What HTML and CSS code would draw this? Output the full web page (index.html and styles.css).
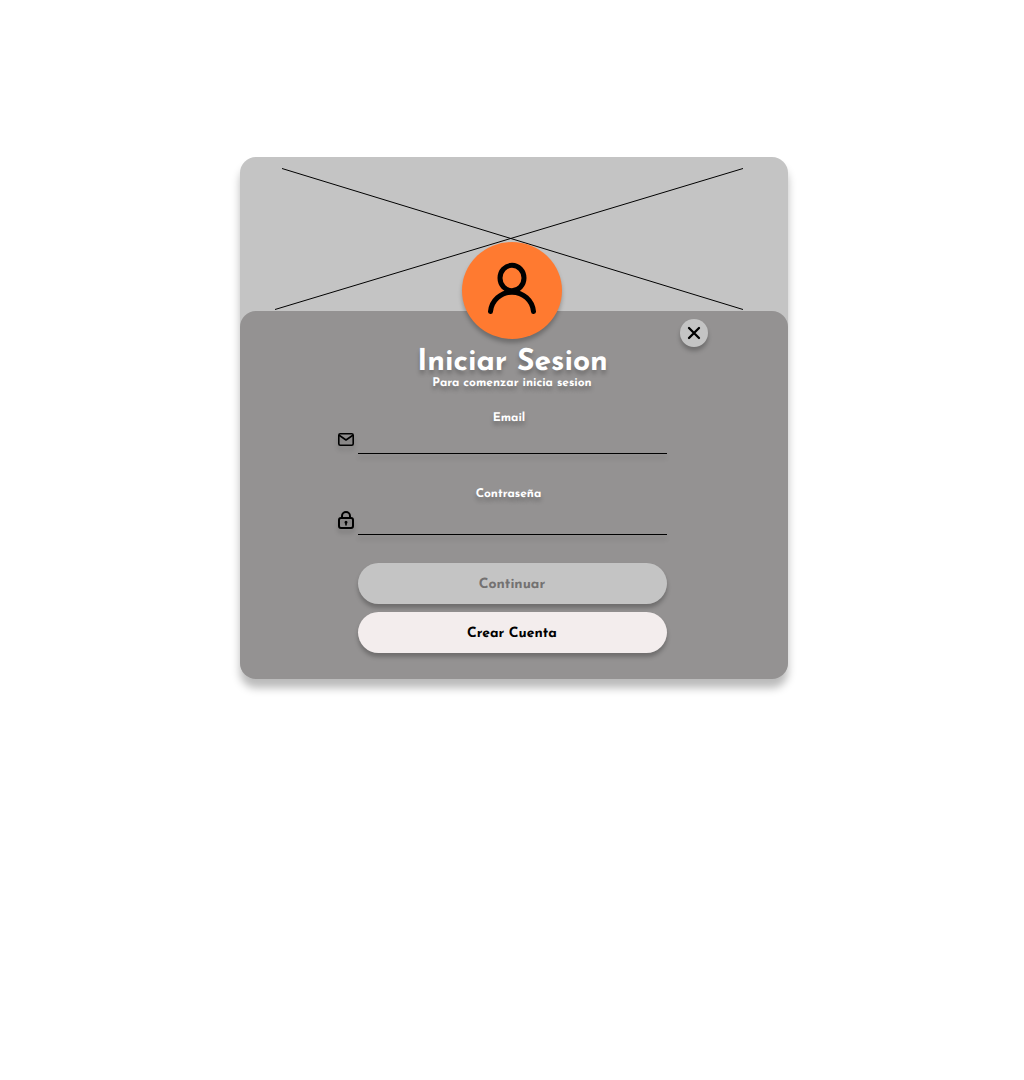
FILE: index.html
```html
<!DOCTYPE html>
<html lang="es">
<head>
<meta charset="utf-8">
<title>Iniciar Sesion</title>
<link rel="stylesheet" href="styles.css">
</head>
<body>
<main class="card">
  <svg class="cover" viewBox="0 0 548 154" aria-hidden="true">
    <path d="M42 11.5 503 152.500M35 152.500 503 11.500" fill="none" stroke="#000" stroke-width="1"/>
  </svg>
  <section class="panel">
    <div class="avatar">
      <svg width="50" height="54" viewBox="0 0 50 54" fill="none" stroke="#000" stroke-width="5" stroke-linecap="round">
        <ellipse cx="25" cy="16" rx="12" ry="12.700"/>
        <path d="M3.500 49.500A21.600 21.400 0 0 1 46.500 49.500"/>
      </svg>
    </div>
    <button class="close" type="button" aria-label="Cerrar">
      <svg width="14" height="14" viewBox="0 0 14 14" stroke="#000" stroke-width="2.300" stroke-linecap="round"><path d="M2 2 12 12M12 2 2 12"/></svg>
    </button>
    <h1 class="title">Iniciar Sesion</h1>
    <p class="subtitle">Para comenzar inicia sesion</p>
    <form class="form">
      <div class="field">
        <label class="label email-label" for="email">Email</label>
        <svg class="icon" width="16" height="20" viewBox="0 0 16 20" fill="none" stroke="#000" stroke-width="1.600" stroke-linejoin="round" stroke-linecap="round"><rect x=".8" y="3.800" width="14.400" height="11.400" rx="1.500"/><path d="M1.500 5.500 8 10l6.500-4.500"/></svg>
        <input class="input" id="email" type="email">
      </div>
      <div class="field password">
        <label class="label password-label" for="password">Contraseña</label>
        <svg class="icon" width="16" height="20" viewBox="0 0 16 20" fill="none" stroke="#000" stroke-width="2"><rect x="1" y="8" width="14" height="10" rx="2"/><path d="M4 8V6a4 4 0 0 1 8 0v2"/><path d="M8 12v3.500" stroke-width="1.600"/><circle cx="8" cy="12.300" r=".7" stroke-width="1.600"/></svg>
        <input class="input" id="password" type="password">
      </div>
      <button class="button continue" type="button">Continuar</button>
      <button class="button create" type="button">Crear Cuenta</button>
    </form>
  </section>
</main>
</body>
</html>
```
FILE: styles.css
```css
* { box-sizing: border-box; }
body {
  min-height: 1080px;
  margin: 0;
  padding: 157px 0 0 240px;
  background: #fff;
  font-family: "Josefin Sans", Lato, sans-serif;
  font-weight: 700;
  text-rendering: geometricPrecision;
}
.card {
  width: 548px;
  height: 522px;
  border-radius: 16px;
  background: #c4c4c4;
  box-shadow: 0 9px 8px rgba(0, 0, 0, .27);
}
.cover { display: block; width: 548px; height: 154px; }
.panel {
  position: relative;
  display: flex;
  flex-direction: column;
  align-items: center;
  height: 368px;
  padding-right: 3px;
  border-radius: 16px;
  background: #949292;
}
.avatar {
  display: flex;
  flex: none;
  justify-content: center;
  width: 100px;
  height: 97px;
  margin-top: -69px;
  margin-right: 1px;
  padding-top: 20px;
  border-radius: 50%;
  background: #ff7a30;
  box-shadow: 0 4px 4px rgba(0, 0, 0, .25);
}
.close {
  position: absolute;
  top: 8px;
  left: 440px;
  display: flex;
  align-items: center;
  justify-content: center;
  width: 28px;
  height: 28px;
  padding: 0;
  border: 0;
  border-radius: 50%;
  background: #c4c4c4;
  box-shadow: 0 4px 4px rgba(0, 0, 0, .25);
}
.title, .subtitle, .label {
  color: #fff;
  text-shadow: 0 4px 4px rgba(0, 0, 0, .25);
  white-space: nowrap;
}
.title { margin: 8px 0 0; font-size: 30px; line-height: 32px; }
.subtitle { margin: -3px 1px 0 0; font-size: 12px; line-height: 14px; }
.form { width: 329px; margin: 20px 20px 0 0; }
.field {
  display: grid;
  grid-template-columns: 20px 309px;
  grid-template-rows: 14px 30px;
}
.password { margin-top: 32px; grid-template-rows: 14px 35px; }
.label { grid-column: 2; padding-top: 1px; font-size: 12px; line-height: 14px; text-align: center; }
.email-label { padding-right: 7px; }
.password-label { padding-right: 8px; }
.icon { margin-top: 6px; filter: drop-shadow(0 4px 2px rgba(0, 0, 0, .18)); }
.password .icon { margin-top: 10px; }
.input {
  width: 100%;
  padding: 0;
  border: 0;
  border-bottom: 1px solid #000;
  outline: 0;
  background: transparent;
  filter: drop-shadow(0 4px 2px rgba(0, 0, 0, .2));
}
.button {
  display: block;
  width: 309px;
  height: 41px;
  margin: 8px 0 0 20px;
  padding: 2px 1px 0 0;
  border: 0;
  border-radius: 21px;
  font: inherit;
  font-size: 14px;
  text-rendering: inherit;
  box-shadow: 0 4px 4px rgba(0, 0, 0, .25);
}
.continue { margin-top: 28px; background: #c4c4c4; color: #737171; }
.create { background: #f3eded; color: #000; }
```
